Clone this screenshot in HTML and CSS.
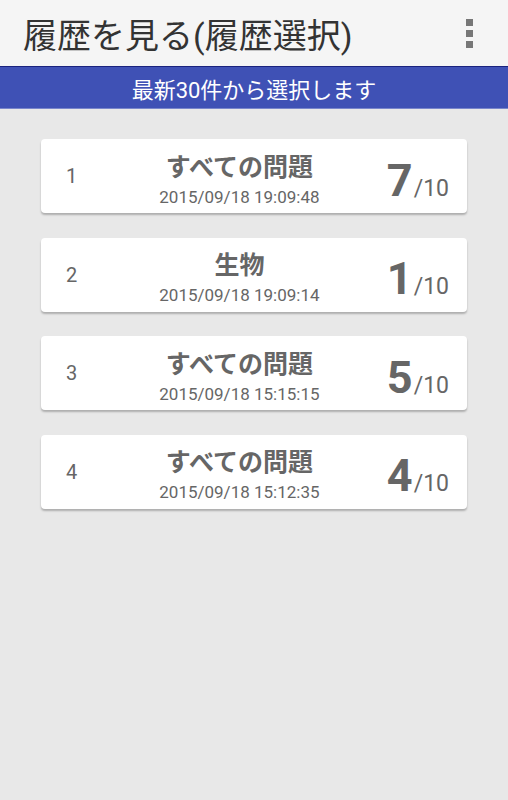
FILE: index.html
```html
<!DOCTYPE html>
<html lang="ja">

<head>
    <meta charset="UTF-8">
    <meta name="viewport" content="width=device-width, initial-scale=1.0">
    <title>履歴を見る</title>
    <link rel="stylesheet" href="styles.css">
</head>

<body>

    <header class="appbar">
        <h1>履歴を見る(履歴選択)</h1>
        <div class="menu">
            <span></span>
            <span></span>
            <span></span>
        </div>
    </header>

    <div class="notice">最新30件から選択します</div>

    <ul class="history">
        <li class="card">
            <span class="num">1</span>
            <div class="info">
                <div class="name">すべての問題</div>
                <div class="date">2015/09/18 19:09:48</div>
            </div>
            <div class="score"><b>7</b>/10</div>
        </li>
        <li class="card">
            <span class="num">2</span>
            <div class="info">
                <div class="name">生物</div>
                <div class="date">2015/09/18 19:09:14</div>
            </div>
            <div class="score"><b>1</b>/10</div>
        </li>
        <li class="card">
            <span class="num">3</span>
            <div class="info">
                <div class="name">すべての問題</div>
                <div class="date">2015/09/18 15:15:15</div>
            </div>
            <div class="score"><b>5</b>/10</div>
        </li>
        <li class="card">
            <span class="num">4</span>
            <div class="info">
                <div class="name">すべての問題</div>
                <div class="date">2015/09/18 15:12:35</div>
            </div>
            <div class="score"><b>4</b>/10</div>
        </li>
    </ul>

</body>

</html>
```

FILE: styles.css
```css
body {
    font-family: Roboto, "Noto Sans CJK JP", sans-serif;
    margin: 0;
    padding: 0;
    background-color: #e8e8e8;
    color: #333;
    min-height: 800px;
}

.appbar {
    height: 66px;
    background-color: #f5f5f5;
    display: flex;
    align-items: center;
    justify-content: space-between;
    padding: 0 35px 0 23px;
}

.appbar h1 {
    margin: 0;
    font-size: 34px;
    font-weight: normal;
    color: #333;
}

.menu {
    display: flex;
    flex-direction: column;
    gap: 4px;
}

.menu span {
    width: 7px;
    height: 7px;
    background-color: #777;
}

.notice {
    height: 41px;
    border-top: 1px solid #1a237e;
    border-bottom: 1px solid #7986cb;
    background-color: #3f51b5;
    color: white;
    font-size: 22px;
    display: flex;
    align-items: center;
    justify-content: center;
}

.history {
    list-style: none;
    margin: 0;
    padding: 30px 41px;
    display: flex;
    flex-direction: column;
    gap: 24.6px;
}

.card {
    height: 74px;
    background-color: white;
    border-radius: 4px;
    box-shadow: 0 2px 2px rgba(0, 0, 0, 0.25);
    display: flex;
    align-items: center;
    padding: 0 18px 0 25px;
    color: #666;
}

.num {
    width: 40px;
    font-size: 20px;
}

.info {
    flex: 1;
    text-align: center;
    padding: 11px 14px 0 0;
}

.name {
    font-size: 25px;
    font-weight: bold;
    line-height: 30px;
}

.date {
    font-size: 17px;
    line-height: 28px;
}

.score {
    font-size: 23px;
    padding-top: 8px;
}

.score b {
    font-size: 45px;
    margin-right: 1px;
}
```
